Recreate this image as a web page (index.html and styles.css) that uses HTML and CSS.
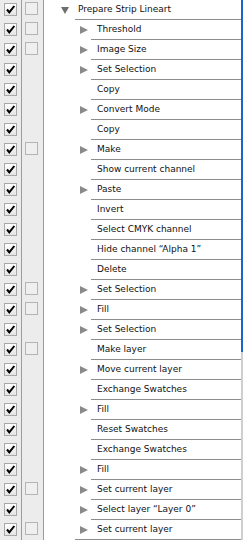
FILE: index.html
```html
<!DOCTYPE html>
<html lang="en">
<head>
    <meta charset="UTF-8">
    <meta name="viewport" content="width=device-width, initial-scale=1.0">
    <title>Actions</title>
    <link rel="stylesheet" href="styles.css">
</head>
<body>
    <div class="panel">
        <div id="list" class="list"></div>
        <div class="scroll"><div class="thumb"></div></div>
    </div>

    <script>
        // name, has children (twisty), has dialog toggle
        const steps = [
            ['Threshold', 1, 1],
            ['Image Size', 1, 1],
            ['Set Selection', 1, 0],
            ['Copy', 0, 0],
            ['Convert Mode', 1, 0],
            ['Copy', 0, 0],
            ['Make', 1, 1],
            ['Show current channel', 0, 0],
            ['Paste', 1, 0],
            ['Invert', 0, 0],
            ['Select CMYK channel', 0, 0],
            ['Hide channel \u201cAlpha 1\u201d', 0, 0],
            ['Delete', 0, 0],
            ['Set Selection', 1, 1],
            ['Fill', 1, 1],
            ['Set Selection', 1, 0],
            ['Make layer', 0, 1],
            ['Move current layer', 1, 0],
            ['Exchange Swatches', 0, 0],
            ['Fill', 1, 0],
            ['Reset Swatches', 0, 0],
            ['Exchange Swatches', 0, 0],
            ['Fill', 1, 0],
            ['Set current layer', 1, 1],
            ['Select layer \u201cLayer 0\u201d', 1, 0],
            ['Set current layer', 1, 1]
        ];

        const check = '<svg width="11" height="11" viewBox="0 0 11 11"><path d="M2 5.5 L4.3 8.3 L9.3 2" fill="none" stroke="#000" stroke-width="2"/></svg>';

        function row(name, twisty, dialog, kind) {
            return '<div class="row ' + kind + '">' +
                '<div class="cell"><span class="box">' + check + '</span></div>' +
                '<div class="cell">' + (dialog ? '<span class="dlg"></span>' : '') + '</div>' +
                '<div class="item">' +
                    '<span class="twisty">' + (twisty ? '<i class="tri"></i>' : '') + '</span>' +
                    '<span class="label">' + name + '</span>' +
                '</div>' +
            '</div>';
        }

        let html = row('Prepare Strip Lineart', 1, 1, 'parent');
        steps.forEach(function (s, i) {
            html += row(s[0], s[1], s[2], i === steps.length - 1 ? 'child last' : 'child');
        });
        document.getElementById('list').innerHTML = html;
    </script>
</body>
</html>
```

FILE: styles.css
```css
body {
    margin: 0;
    font-family: "DejaVu Sans", sans-serif;
    font-size: 9px;
    color: #111;
    background: #fff;
}
.panel {
    display: flex;
    width: 243px;
    height: 540px;
    overflow: hidden;
}
.list {
    flex: 1;
}
.row {
    display: flex;
    height: 20px;
}
.cell {
    width: 21px;
    border-right: 1px solid #9c9c9c;
    background: #ececec;
    position: relative;
}
.box {
    position: absolute;
    left: 4px;
    top: 3px;
    width: 11px;
    height: 11px;
    border: 1px solid #a8a8a8;
    background: linear-gradient(#ffffff, #e4e4e4);
}
.box svg {
    display: block;
}
.dlg {
    position: absolute;
    left: 3px;
    top: 2px;
    width: 11px;
    height: 11px;
    border: 1px solid #b4b4b4;
    background: #efefef;
}
.item {
    flex: 1;
    display: flex;
    background: #fff;
}
.twisty {
    flex: none;
    position: relative;
}
.label {
    flex: 1;
    height: 19px;
    line-height: 19px;
    border-bottom: 1px solid #8c8c8c;
    white-space: nowrap;
}
.parent .twisty {
    width: 31px;
}
.parent .label {
    padding-left: 3px;
}
.child .twisty {
    width: 47px;
}
.child .label {
    padding-left: 6px;
}
.last .item {
    background: linear-gradient(#8c8c8c, #8c8c8c) no-repeat 31px 100% / 100% 1px;
}
.tri {
    position: absolute;
    width: 0;
    height: 0;
}
.parent .tri {
    left: 17px;
    top: 7px;
    border-left: 4.5px solid transparent;
    border-right: 4.5px solid transparent;
    border-top: 7px solid #6e6e6e;
}
.child .tri {
    left: 36px;
    top: 6px;
    border-top: 4px solid transparent;
    border-bottom: 4px solid transparent;
    border-left: 8px solid #8a8a8a;
}
.scroll {
    width: 2px;
    background: #cfcfcf;
}
.thumb {
    height: 352px;
    background: #1b62d1;
}
```
